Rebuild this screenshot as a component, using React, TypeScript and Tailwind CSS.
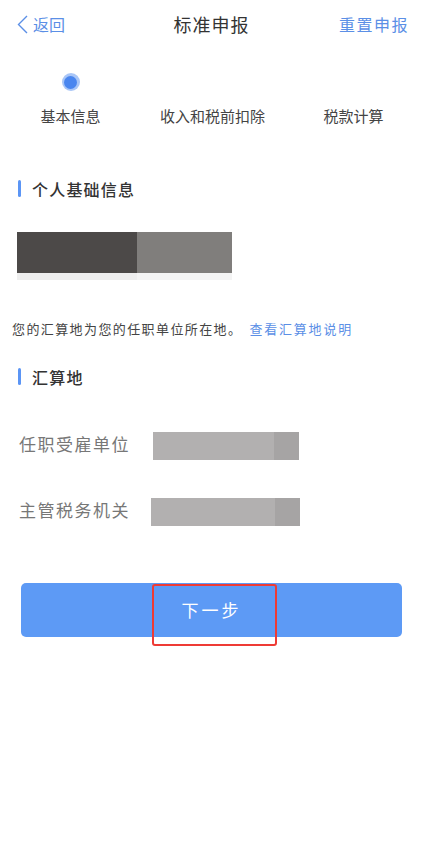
const FONT = "font-['Noto_Sans_CJK_SC','Noto_Sans',sans-serif]"

function Chevron() {
  return (
    <svg width="11" height="19" viewBox="0 0 11 19" fill="none">
      <path d="M10 1L1.5 9.5L10 18" stroke="#5b8fe6" strokeWidth="1.4" />
    </svg>
  )
}

function SectionTitle({ text }: { text: string }) {
  return (
    <div className="flex items-center gap-[11px] pl-[18px]">
      <span className="w-[3px] h-[17px] rounded-full bg-[#5b95f5]" />
      <span className="text-[16px] leading-none font-medium text-[#333] tracking-[1.2px]">{text}</span>
    </div>
  )
}

function Row({ label, labelW, width }: { label: string; labelW: string; width: string }) {
  return (
    <div className="flex items-center h-[28px] pl-[19px]">
      <span className={`${labelW} -mt-[6px] text-[17px] leading-none text-[#777] tracking-[1.5px]`}>{label}</span>
      <div className={`flex h-[28px] ${width}`}>
        <div className="flex-1 bg-[#b2b0b0]" />
        <div className="w-[25px] bg-[#a6a4a4]" />
      </div>
    </div>
  )
}

export default function App() {
  return (
    <div className={`w-[423px] h-[844px] bg-white ${FONT} flex flex-col`}>
      {/* Header */}
      <div className="relative flex items-center justify-between h-[48px] pl-[17px] pr-[14px]">
        <div className="flex items-center gap-[5px] text-[16px] text-[#5b8fe6]">
          <Chevron />
          <span>返回</span>
        </div>
        <span className="absolute left-1/2 -translate-x-1/2 text-[18px] text-[#333] tracking-[1px]">标准申报</span>
        <span className="text-[16px] text-[#5b8fe6] tracking-[1.5px]">重置申报</span>
      </div>

      {/* Steps */}
      <div className="grid grid-cols-3 mt-[25px]">
        <div className="flex flex-col items-center">
          <div className="w-[18px] h-[18px] rounded-full bg-[#a9c6f7] flex items-center justify-center">
            <div className="w-[13px] h-[13px] rounded-full bg-[#4a86ef]" />
          </div>
          <span className="mt-[17px] text-[15px] leading-none text-[#444]">基本信息</span>
        </div>
        <div className="flex flex-col items-center">
          <div className="h-[18px]" />
          <span className="mt-[17px] text-[15px] leading-none text-[#444] pl-[2px]">收入和税前扣除</span>
        </div>
        <div className="flex flex-col items-center">
          <div className="h-[18px]" />
          <span className="mt-[17px] text-[15px] leading-none text-[#444] pl-[2px]">税款计算</span>
        </div>
      </div>

      {/* Section 1 */}
      <div className="mt-[57px]">
        <SectionTitle text="个人基础信息" />
      </div>

      <div className="mt-[35px] pl-[17px]">
        <div className="flex w-[215px] h-[41px]">
          <div className="w-[120px] bg-[#4c4948]" />
          <div className="flex-1 bg-[#807e7c]" />
        </div>
        <div className="flex w-[215px] h-[7px]">
          <div className="w-[120px] bg-[#eeeeee]" />
          <div className="flex-1 bg-[#f4f4f4]" />
        </div>
      </div>

      <p className="mt-[42px] pl-[12px] text-[13px] leading-none text-[#444] tracking-[1.4px]">
        您的汇算地为您的任职单位所在地。
        <span className="ml-[7px] tracking-[1.8px] text-[#5b8fe6]">查看汇算地说明</span>
      </p>

      {/* Section 2 */}
      <div className="mt-[33px]">
        <SectionTitle text="汇算地" />
      </div>

      <div className="mt-[47px] flex flex-col gap-[38px]">
        <Row label="任职受雇单位" labelW="w-[134px]" width="w-[146px]" />
        <Row label="主管税务机关" labelW="w-[132px]" width="w-[149px]" />
      </div>

      {/* Button */}
      <div className="mt-[57px] px-[21px]">
        <div className="relative h-[54px] rounded-[5px] bg-[#5d9af5] flex items-center justify-center">
          <span className="text-[17px] text-white tracking-[3px]">下一步</span>
          <div className="absolute left-[131px] top-[1px] w-[125px] h-[62px] border-2 border-[#ee3b35] rounded-[3px]" />
        </div>
      </div>
    </div>
  )
}
